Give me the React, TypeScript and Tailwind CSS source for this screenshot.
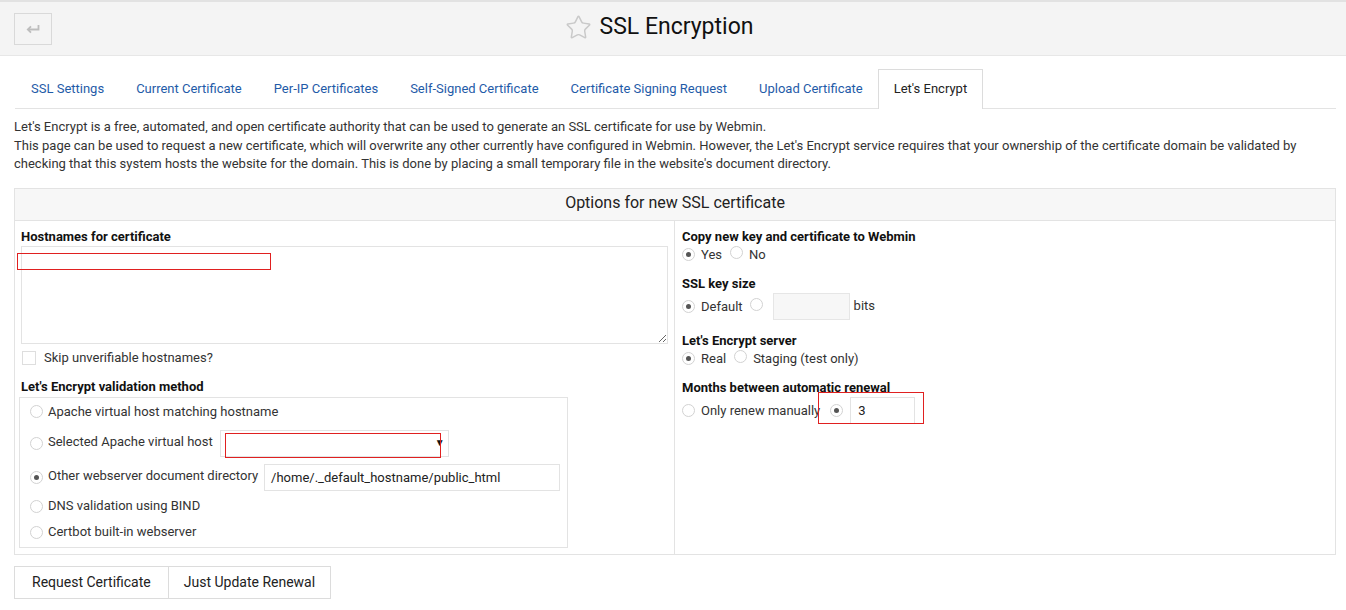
import { Star } from 'lucide-react'

function Radio({ checked }: { checked?: boolean }) {
  return (
    <span className="inline-flex h-[13px] w-[13px] shrink-0 items-center justify-center rounded-full border border-[#d2d2d2] bg-white">
      {checked && <span className="h-[5px] w-[5px] rounded-full bg-[#555]" />}
    </span>
  )
}

function Label({ children }: { children: React.ReactNode }) {
  return <div className="h-[18px] leading-[18px] font-bold text-[#111]">{children}</div>
}

const tabs = [
  'SSL Settings',
  'Current Certificate',
  'Per-IP Certificates',
  'Self-Signed Certificate',
  'Certificate Signing Request',
  'Upload Certificate',
]

export default function App() {
  return (
    <div className="min-h-[610px] bg-white text-[13px] text-[#333]" style={{ fontFamily: 'Roboto, "Liberation Sans", sans-serif' }}>
      <div className="h-[2px] bg-[#e2e2e2]" />
      <div className="grid h-[54px] grid-cols-[1fr_auto_1fr] items-center border-b border-[#e7e7e7] bg-[#f4f4f4] px-[14px]">
        <div>
          <button className="flex h-[32px] w-[38px] items-center justify-center border border-[#d9d9d9]">
            <svg width="14" height="10" viewBox="0 0 14 10" fill="none" stroke="#bdbdbd" strokeWidth="1.8">
              <path d="M12.5 1v4.5H2" />
              <path d="M5 2.3L1.8 5.5 5 8.7" />
            </svg>
          </button>
        </div>
        <div className="flex items-center gap-[8px] pb-[2px] pr-[28px]">
          <Star size={27} strokeWidth={1.3} color="#c9c9c9" />
          <span className="text-[23px] text-[#111]">SSL Encryption</span>
        </div>
        <div />
      </div>

      <div className="ml-[15px] mr-[10px] mt-[14px] flex h-[39px] items-end border-b border-[#e3e3e3]">
        {tabs.map((t) => (
          <div key={t} className="flex h-[39px] items-center border border-transparent px-[15px] text-[#1f5ba8]">
            {t}
          </div>
        ))}
        <div className="-mb-px -ml-px flex h-[40px] items-center border border-b-0 border-[#dcdcdc] bg-white px-[15px] pb-px text-[#222]">
          Let's Encrypt
        </div>
      </div>

      <div className="ml-[14px] mr-[10px] mt-[9px] leading-[18.5px]">
        <div>Let's Encrypt is a free, automated, and open certificate authority that can be used to generate an SSL certificate for use by Webmin.</div>
        <div>
          This page can be used to request a new certificate, which will overwrite any other currently have configured in Webmin. However, the Let's Encrypt service requires that your ownership of the certificate domain be validated by checking that this system hosts the website for the domain. This is done by placing a small temporary file in the website's document directory.
        </div>
      </div>

      <div className="ml-[14px] mr-[10px] mt-[14px] border border-[#e3e3e3]">
        <div className="flex h-[32px] items-center justify-center border-b border-[#e3e3e3] bg-[#f7f7f7] pb-[2px] text-[16px] text-[#222]">
          Options for new SSL certificate
        </div>
        <div className="grid grid-cols-[660px_1fr]">
          <div className="relative border-r border-[#e3e3e3] px-[6px] pt-[7px] pb-[6px]">
            <Label>Hostnames for certificate</Label>
            <textarea className="block h-[98px] w-full resize-y border border-[#e3e3e3] outline-none" />
            <div className="pointer-events-none absolute left-[2px] top-[32px] h-[17px] w-[254px] border border-[#e02020]" />
            <div className="flex h-[28px] items-center gap-[8px] pl-px">
              <span className="h-[14px] w-[14px] border border-[#dedede] bg-white" />
              <span>Skip unverifiable hostnames?</span>
            </div>
            <div className="mt-[6px]">
              <Label>Let's Encrypt validation method</Label>
            </div>
            <div className="ml-[-2px] mt-px w-[549px] border border-[#e3e3e3] pl-[10px] pr-[6px] pt-[3px] pb-[1px] whitespace-nowrap">
              <div className="flex h-[22px] items-center gap-[5px]">
                <Radio />
                <span>Apache virtual host matching hostname</span>
              </div>
              <div className="flex h-[39px] items-center gap-[5px] pt-[2px]">
                <Radio />
                <span className="-mt-[3px]">Selected Apache virtual host</span>
                <div className="relative ml-[2px] flex h-[27px] w-[229px] items-center justify-end border border-[#e3e3e3] pr-[3px]">
                  <span className="text-[10px] leading-none text-[#111]">▼</span>
                  <div className="absolute left-[4px] top-[2px] h-[25px] w-[216px] border border-[#e02020]" />
                </div>
              </div>
              <div className="flex h-[32px] items-center gap-[5px]">
                <Radio checked />
                <span className="-mt-[3px]">Other webserver document directory</span>
                <div className="ml-px flex h-[27px] w-[296px] items-center border border-[#e3e3e3] px-[6px] text-[#222]">
                  /home/._default_hostname/public_html
                </div>
              </div>
              <div className="flex h-[25px] items-center gap-[5px]">
                <Radio />
                <span>DNS validation using BIND</span>
              </div>
              <div className="flex h-[27px] items-center gap-[5px]">
                <Radio />
                <span>Certbot built-in webserver</span>
              </div>
            </div>
          </div>

          <div className="px-[7px] pt-[7px]">
            <Label>Copy new key and certificate to Webmin</Label>
            <div className="flex h-[18px] items-center">
              <Radio checked />
              <span className="ml-[6px]">Yes</span>
              <span className="ml-[8px]"><Radio /></span>
              <span className="ml-[6px]">No</span>
            </div>
            <div className="mt-[11px]">
              <Label>SSL key size</Label>
            </div>
            <div className="flex h-[28px] items-center">
              <Radio checked />
              <span className="ml-[6px]">Default</span>
              <span className="ml-[7px]"><Radio /></span>
              <div className="ml-[10px] h-[27px] w-[77px] border border-[#e6e6e6] bg-[#f7f7f7]" />
              <span className="ml-[4px] -mt-[2px]">bits</span>
            </div>
            <div className="mt-[11px]">
              <Label>Let's Encrypt server</Label>
            </div>
            <div className="flex h-[18px] items-center">
              <Radio checked />
              <span className="ml-[6px]">Real</span>
              <span className="ml-[8px]"><Radio /></span>
              <span className="ml-[6px]">Staging (test only)</span>
            </div>
            <div className="mt-[11px]">
              <Label>Months between automatic renewal</Label>
            </div>
            <div className="flex h-[28px] items-center">
              <Radio />
              <span className="ml-[6px]">Only renew manually</span>
              <div className="relative ml-[10px] flex items-center">
                <Radio checked />
                <div className="ml-[7px] flex h-[27px] w-[65px] items-center border border-[#e3e3e3] px-[7px] text-[#222]">3</div>
                <div className="absolute left-[-12px] top-[-5px] h-[32px] w-[106px] border border-[#e02020]" />
              </div>
            </div>
          </div>
        </div>
      </div>

      <div className="mx-[14px] mt-[11px] flex">
        <button className="h-[33px] border border-[#dcdcdc] bg-white px-[17px] text-[14px] text-[#222]">Request Certificate</button>
        <button className="-ml-px h-[33px] border border-[#dcdcdc] bg-white px-[15px] text-[14px] text-[#222]">Just Update Renewal</button>
      </div>
    </div>
  )
}
